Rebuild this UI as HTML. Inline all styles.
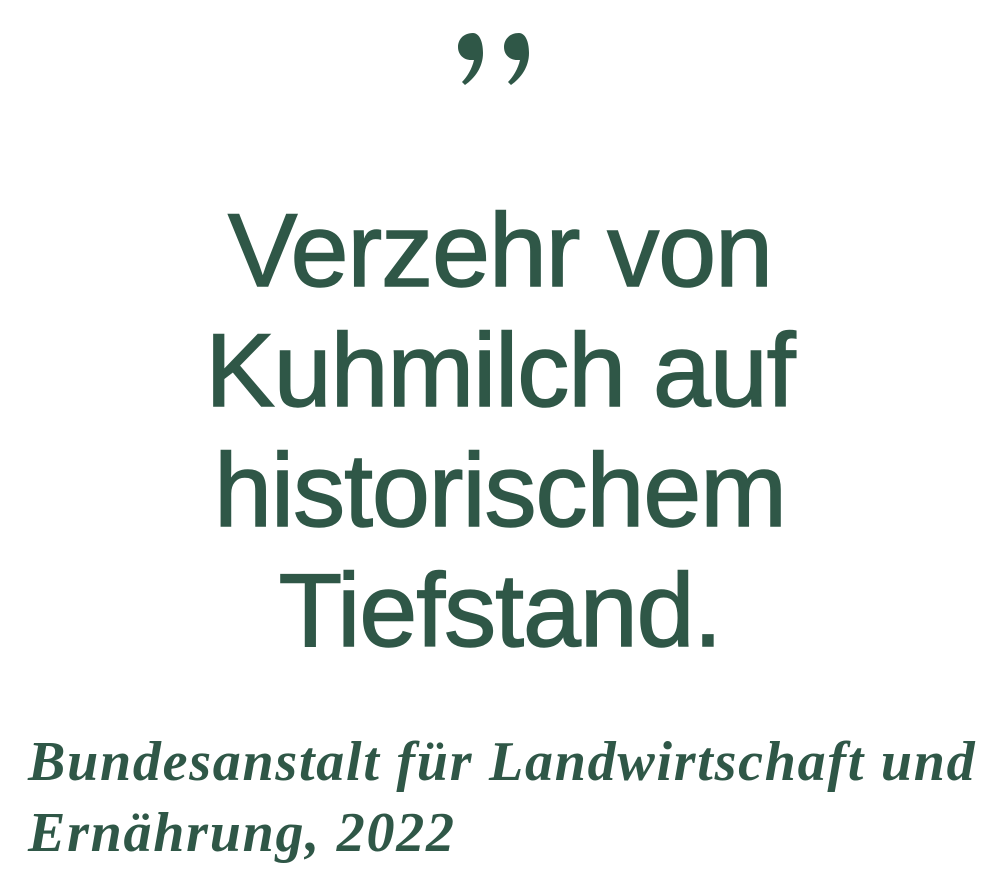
<!DOCTYPE html>
<html><head><meta charset="utf-8"><style>
html,body{margin:0;padding:0;background:#fff;width:1000px;height:878px;overflow:hidden;}
.h{position:absolute;left:0;width:1000px;top:191px;text-align:center;font-family:"Liberation Sans",sans-serif;font-size:104px;line-height:120px;color:#2f5747;letter-spacing:-1px;-webkit-text-stroke:1.5px #2f5747;}
.c{position:absolute;left:28px;top:727px;width:972px;font-family:"Liberation Serif",serif;font-weight:bold;font-style:italic;font-size:56px;line-height:71px;color:#2f5747;letter-spacing:1.75px;white-space:nowrap;}
</style></head><body>
<svg style="position:absolute;left:0;top:0" width="1000" height="120">
<g fill="#2f5747">
<path d="M473 33c-10 0-15 7-15 14 0 8 6 13 13 13 1 0 2 0 3 0-2 9-7 17-12 22l3 3c10-7 18-18 18-32 0-12-4-20-10-20z"/>
<path d="M519 33c-10 0-15 7-15 14 0 8 6 13 13 13 1 0 2 0 3 0-2 9-7 17-12 22l3 3c10-7 18-18 18-32 0-12-4-20-10-20z"/>
</g></svg>
<div class="h">Verzehr von<br>Kuhmilch auf<br>historischem<br>Tiefstand.</div>
<div class="c">Bundesanstalt für Landwirtschaft und<br>Ernährung, 2022</div>
</body></html>
